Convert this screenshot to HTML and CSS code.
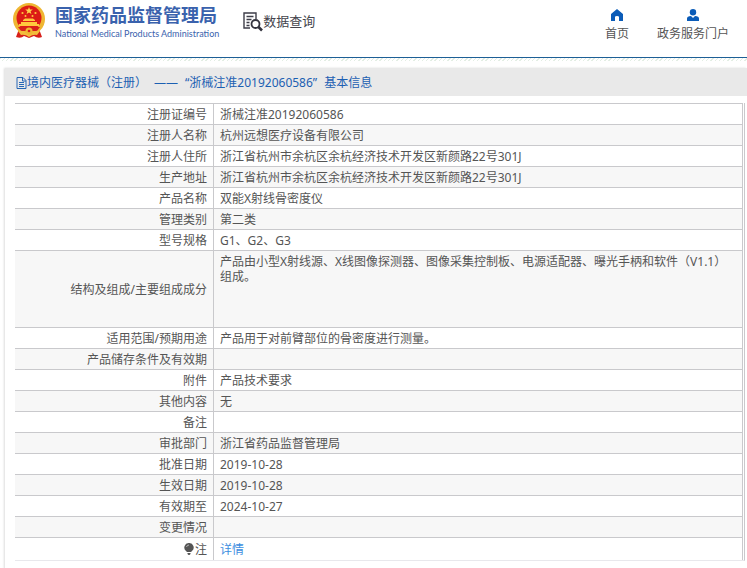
FILE: index.html
```html
<!DOCTYPE html>
<html lang="zh-CN">
<head>
<meta charset="utf-8">
<meta name="viewport" content="width=device-width, initial-scale=1">
<title>数据查询</title>
<link rel="stylesheet" href="styles.css">
</head>
<body>
<header class="site-header">
  <a class="brand" href="#">
    <svg class="emblem" viewBox="0 0 32 36" aria-hidden="true">
      <path d="M6 26 3 34q5 2 8-1l5 2 5-2q4 3 8 1l-3-8z" fill="#d71f1a"/>
      <circle cx="16" cy="16" r="16" fill="#efb632"/>
      <circle cx="16" cy="15" r="12.500" fill="#dc1c16"/>
      <path d="m16 4 1 2.600h2.800l-2.200 1.700.8 2.700-2.400-1.600-2.400 1.600.8-2.700-2.200-1.700H15z" fill="#ffd34a"/>
      <g fill="#ffc83d">
        <circle cx="9.500" cy="10" r="1.100"/><circle cx="22.500" cy="10" r="1.100"/>
        <circle cx="12.500" cy="13" r="1"/><circle cx="19.500" cy="13" r="1"/>
        <path d="M10 17l2-1.500h8l2 1.500v1H10zM8 19h16v2h2v2H6v-2h2z"/>
      </g>
      <path d="M5 24h22l-3 4H8z" fill="#d71f1a"/>
      <circle cx="16" cy="28" r="3.500" fill="#efb632"/>
      <circle cx="16" cy="28" r="1.300" fill="#d71f1a"/>
      <path d="M5 28q6-1 8 2l3 2 3-2q2-3 8-2l-3 4q-4-1-8 2-4-3-8-2z" fill="#f3bd3b"/>
    </svg>
    <span class="brand-text">
      <span class="brand-cn">国家药品监督管理局</span>
      <span class="brand-en">National Medical Products Administration</span>
    </span>
  </a>
  <a class="query" href="#">
    <svg class="query-icon" viewBox="0 0 20 20" aria-hidden="true">
      <path d="M7 16H1V1h12v6M3.500 4.500h7M3.500 7.500h5M3.500 10.500h3M3.500 13.500h3" fill="none" stroke="#3d3d48" stroke-width="1.400"/>
      <circle cx="12.500" cy="12" r="4" fill="#fff" stroke="#33333e" stroke-width="1.800"/>
      <path d="m15.500 15 3.500 3.500" stroke="#33333e" stroke-width="2.600"/>
    </svg>
    <span>数据查询</span>
  </a>
  <nav class="nav">
    <a href="#">
      <svg class="nav-icon" viewBox="0 0 12 12" aria-hidden="true"><path d="M6 0 12 5v7H8V8q0-1-2-1T4 8v4H0V5z" fill="#0b5cb8"/></svg>
      <span>首页</span>
    </a>
    <a href="#">
      <svg class="nav-icon" viewBox="0 0 12 12" aria-hidden="true"><circle cx="6" cy="3.200" r="3.200" fill="#0b5cb8"/><path d="M0 12V9.500Q0 7 4 7l2 2 2-2q4 0 4 2.500V12z" fill="#0b5cb8"/></svg>
      <span>政务服务门户</span>
    </a>
  </nav>
</header>
<main class="panel">
  <h1 class="panel-title">
    <svg class="doc-icon" viewBox="0 0 11 12" aria-hidden="true"><path d="M1 .5h6l3 3v8H1zM6.500.5v3.500H10M3 5.500h5M3 7.500h5M3 9.500h5" fill="none" stroke="#2867b5"/></svg>
    <span class="title-parts">
      <span>境内医疗器械（注册）</span>
      <span>——</span>
      <span>“浙械注准20192060586”</span>
      <span>基本信息</span>
    </span>
  </h1>
  <div class="table-frame">
    <table class="info">
      <tbody>
        <tr><th scope="row">注册证编号</th><td>浙械注准20192060586</td></tr>
        <tr><th scope="row">注册人名称</th><td>杭州远想医疗设备有限公司</td></tr>
        <tr><th scope="row">注册人住所</th><td>浙江省杭州市余杭区余杭经济技术开发区新颜路22号301J</td></tr>
        <tr><th scope="row">生产地址</th><td>浙江省杭州市余杭区余杭经济技术开发区新颜路22号301J</td></tr>
        <tr><th scope="row">产品名称</th><td>双能X射线骨密度仪</td></tr>
        <tr><th scope="row">管理类别</th><td>第二类</td></tr>
        <tr><th scope="row">型号规格</th><td>G1、G2、G3</td></tr>
        <tr class="tall"><th scope="row">结构及组成/主要组成成分</th><td>产品由小型X射线源、X线图像探测器、图像采集控制板、电源适配器、曝光手柄和软件（V1.1）组成。</td></tr>
        <tr><th scope="row">适用范围/预期用途</th><td>产品用于对前臂部位的骨密度进行测量。</td></tr>
        <tr><th scope="row">产品储存条件及有效期</th><td></td></tr>
        <tr><th scope="row">附件</th><td>产品技术要求</td></tr>
        <tr><th scope="row">其他内容</th><td>无</td></tr>
        <tr><th scope="row">备注</th><td></td></tr>
        <tr><th scope="row">审批部门</th><td>浙江省药品监督管理局</td></tr>
        <tr><th scope="row">批准日期</th><td>2019-10-28</td></tr>
        <tr><th scope="row">生效日期</th><td>2019-10-28</td></tr>
        <tr><th scope="row">有效期至</th><td>2024-10-27</td></tr>
        <tr><th scope="row">变更情况</th><td></td></tr>
        <tr class="note"><th scope="row"><svg class="bulb" viewBox="0 0 10 12" aria-hidden="true"><path d="M5 0a4.500 4.500 0 0 1 3 8L7 9H3L2 8a4.500 4.500 0 0 1 3-8zM3.500 10h3v1l-1 1h-1l-1-1z" fill="#555"/><path d="M2.500 4Q3 2 5 2" fill="none" stroke="#ccc" stroke-width=".8"/></svg>注</th><td><a href="#">详情</a></td></tr>
      </tbody>
    </table>
  </div>
</main>
</body>
</html>
```
FILE: styles.css
```css
* {
  box-sizing: border-box;
}

body {
  margin: 0;
  background: #fff;
  color: #555;
  font: 12px/16px "Noto Sans", "Noto Sans CJK SC", sans-serif;
}

a {
  color: inherit;
  text-decoration: none;
}

.site-header {
  display: flex;
  align-items: flex-start;
  height: 61px;
  padding: 3px 18px 0 13px;
  background:
    linear-gradient(#1d5f96, #1d5f96) 0 57px / 100% 1px no-repeat,
    repeating-linear-gradient(135deg, #e3eee4 0 1px, #fff 1px 3px) 0 58px / 100% 3px no-repeat;
}

.brand {
  display: flex;
  gap: 10px;
}

.emblem {
  width: 32px;
  height: 36px;
}

.brand-text {
  display: flex;
  flex-direction: column;
  color: #3a62ad;
}

.brand-cn {
  font-size: 18px;
  font-weight: 700;
  line-height: 25px;
}

.brand-en {
  font: 9px/12px Lato, sans-serif;
}

.query {
  display: flex;
  margin: 8px 0 0 24px;
  color: #44444c;
  font-size: 13px;
  line-height: 20px;
}

.query-icon {
  width: 20px;
  height: 20px;
  margin-top: 1px;
}

.nav {
  display: flex;
  gap: 28px;
  margin: 6px 0 0 auto;
  line-height: 18px;
}

.nav a {
  display: flex;
  flex-direction: column;
  align-items: center;
  gap: 4px;
}

.nav-icon {
  width: 12px;
  height: 12px;
}

.panel {
  margin: 7px 0 0 5px;
  padding-bottom: 8px;
  box-shadow: -1px 0 2px #ddd;
}

.panel-title {
  display: flex;
  align-items: center;
  height: 28px;
  margin: 0;
  padding: 2px 0 0 11px;
  background: #e9e9e9;
  color: #1c60b2;
  font-size: 12px;
  font-weight: 400;
}

.title-parts {
  display: flex;
  gap: 7px;
}

.doc-icon {
  width: 11px;
  height: 12px;
}

.table-frame {
  margin: 7px 2px 0 10px;
  padding-right: 1px;
  border-right: 1px solid #c9c9cc;
  border-bottom: 1px solid #e8e8ec;
}

.info {
  width: 100%;
  border-collapse: separate;
  border-spacing: 0;
  border-right: 1px solid #c9c9cc;
  table-layout: fixed;
}

.info tr {
  height: 21px;
}

.info tr:nth-child(even) {
  background: #f7f7f7;
}

.info th,
.info td {
  padding: 3px 6px 1px;
  border-top: 1px solid #c9c9cc;
  vertical-align: middle;
}

.info th {
  width: 199px;
  border-right: 1px solid #c9c9cc;
  font-weight: 400;
  text-align: right;
}

.info .tall {
  height: 77px;
}

.info .tall td {
  line-height: 15px;
  vertical-align: top;
}

.info .note {
  height: 23px;
}

.info td a {
  color: #3b8de0;
}

.bulb {
  width: 10px;
  height: 12px;
  margin-right: 1px;
  vertical-align: -1px;
}
```
